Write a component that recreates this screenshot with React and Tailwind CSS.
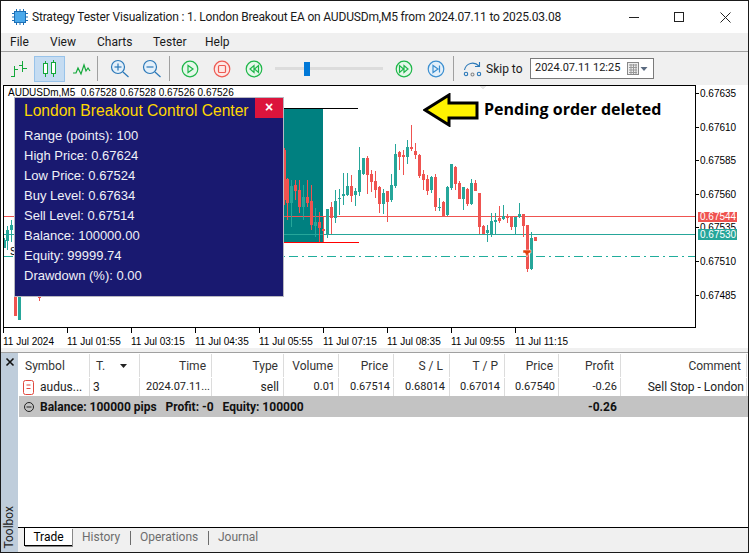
const T = "#26a69a";
const R = "#ef5350";
// x, wickTop, wickBottom, bodyTop, bodyBottom (page px)
const raw = [
  [22,297,385,297,372,T],[34,275,372,291,323,R],[46,240,338,273,323,T],[58,237,315,264,266,T],[70,190,285,252,258,T],[82,190,260,228,255,T],
  [94,195,275,228,258,R],[106,235,288,243,255,T],[118,111,258,180,246,T],[130,143,195,144,192,T],[142,138,252,144,194,R],[154,180,245,192,216,R],
  [166,183,265,213,240,R],[178,228,310,231,282,R],[190,237,312,249,282,T],[202,243,335,243,276,R],[214,192,276,225,270,T],[226,102,234,132,228,T],
  [238,123,180,126,141,R],[250,120,195,135,141,R],[262,90,162,111,141,T],[274,45,123,111,118,R],[286,99,147,123,135,R],[298,132,204,135,198,R],
  [310,180,240,192,210,R],[322,195,255,207,243,R],[334,198,250,201,240,T],[346,192,303,201,291,R],[358,264,302,291,294,T],[370,273,318,276,318,R],
  [382,228,318,231,315,T],[394,162,240,162,234,T],[406,168,240,171,222,R],[418,213,267,219,267,R],[430,231,300,231,267,T],[442,234,288,237,282,R],
  [454,207,285,219,282,T],[466,210,243,219,243,R],[478,249,372,249,351,R],[490,345,372,348,372,R],[502,345,396,360,369,T],[514,309,381,333,375,T],
  [526,309,372,330,336,T],[538,288,340,324,333,R],[550,285,330,318,327,T],[562,312,340,321,324,R],[574,321,360,321,351,R],[586,321,372,321,351,T],
  [598,279,324,312,321,T],[610,312,381,312,348,R],[622,345,486,345,477,R],[634,366,480,384,477,T],[646,381,393,381,393,R],
];
const candles = raw.map(([x, a, b, c, d, col]) => [Math.round(320 + (x - 4) / 3), 110 + a / 3, 110 + b / 3, 110 + c / 3, 110 + d / 3, col]);
const left = [
  [3,238,248,240,248,T],[6,226,250,230,241,T],[10,220,242,225,230,T],[14,290,316,297,316,R],[18,290,320,297,320,T],[38,290,301,297,297,R],
  [283,148,205,150,200,R],[286,178,220,179,203,R],[290,180,227,186,203,T],[294,180,200,185,191,R],[298,180,213,190,207,R],[302,185,220,197,207,T],
  [306,180,207,197,203,R],[310,185,230,201,225,R],[314,208,237,222,226,T],[318,212,242,222,228,R],[322,217,242,229,231,R],
];
const all = [...left, ...candles];

function Candle({ c }) {
  const [x, a, b, d, e, col] = c;
  return (
    <g fill={col}>
      <rect x={x + 1} y={Math.round(a)} width="1" height={Math.round(b - a)} />
      <rect x={x} y={Math.round(d)} width="3" height={Math.max(1, Math.round(e - d))} />
    </g>
  );
}

function Plot() {
  return (
    <svg className="block" width="691" height="241" viewBox="4 86 691 241" shapeRendering="crispEdges">
      <rect x="4" y="86" width="691" height="241" fill="#fff" />
      <polygon points="480,86 486,86 483,90" fill="#e8e8e8" />
      <rect x="200" y="108" width="123" height="134" fill="#008080" />
      <rect x="200" y="108" width="158" height="1" fill="#000" />
      <rect x="4" y="216" width="691" height="1" fill={R} />
      <rect x="4" y="234" width="691" height="1" fill={T} />
      <line x1="4" x2="695" y1="256.5" y2="256.5" stroke="#20ad9c" strokeWidth="1" strokeDasharray="9 4 2 4" />
      {all.map((c, i) => <Candle key={i} c={c} />)}
      <rect x="200" y="242" width="159" height="1" fill="#ff0000" />
      <polygon points="523,250 531,250 531,253 529,253 527,257 525,253 523,253" fill="#e2410f" stroke="#fff" strokeWidth="0.5" shapeRendering="auto" />
    </svg>
  );
}

function Btn({ children, className = "" }) {
  return <div className={`flex items-center justify-center ${className}`}>{children}</div>;
}
const Sep = () => <div className="w-px h-[25px] bg-[#a0a0a0]" />;

function Round({ col, fill, children }) {
  return (
    <svg width="18" height="18" viewBox="0 0 18 18" fill="none" stroke={col} strokeWidth="1.2">
      <circle cx="9" cy="9" r="7.8" fill={fill} />
      {children}
    </svg>
  );
}
function Mag({ minus }) {
  return (
    <svg width="20" height="20" viewBox="0 0 20 20" fill="none" stroke="#2a78b8" strokeWidth="1.2">
      <circle cx="8" cy="8" r="6.5" fill="#e4f0fa" />
      <path d="M4.5 8h7" />
      {!minus && <path d="M8 4.5v7" />}
      <path d="M13 13l5.5 5" />
    </svg>
  );
}

const menus = [["File","w-[40px]"],["View","w-[47px]"],["Charts","w-[56px]"],["Tester","w-[52px]"],["Help","w-[40px]"]];
const prices = ["0.67635","0.67610","0.67585","0.67560","0.67535","0.67510","0.67485"];
const times = ["11 Jul 2024","11 Jul 01:55","11 Jul 03:15","11 Jul 04:35","11 Jul 05:55","11 Jul 07:15","11 Jul 08:35","11 Jul 09:55","11 Jul 11:15"];
const stats = ["Range (points): 100","High Price: 0.67624","Low Price: 0.67524","Buy Level: 0.67634","Sell Level: 0.67514","Balance: 100000.00","Equity: 99999.74","Drawdown (%): 0.00"];
const cols = "grid grid-cols-[71px_50px_72px_72px_55px_55px_56px_55px_54px_62px_126px]";
const heads = [["Symbol","pl-[6px]"],["T.","pl-[6px]"],["Time","justify-end pr-[5px]"],["Type","justify-end pr-[5px]"],["Volume","justify-end pr-[5px]"],["Price","justify-end pr-[5px]"],["S / L","justify-end pr-[6px]"],["T / P","justify-end pr-[6px]"],["Price","justify-end pr-[5px]"],["Profit","justify-end pr-[6px]"],["Comment","justify-end pr-[5px]"]];
const cells = [["audus...","pl-[21px]"],["3","pl-[3px]"],["2024.07.11...","pl-[6px] text-[11px]"],["sell","justify-end pr-[4px]"],["0.01","justify-end pr-[3px] text-[11px]"],["0.67514","justify-end pr-[3px] text-[11px]"],["0.68014","justify-end pr-[4px] text-[11px]"],["0.67014","justify-end pr-[4px] text-[11px]"],["0.67540","justify-end pr-[3px] text-[11px]"],["-0.26","justify-end pr-[3px] text-[11px]"],["Sell Stop - London","justify-end pr-[2px]"]];

export default function App() {
  return (
    <div className="w-[749px] h-[553px] border border-[#1a1a1a] bg-[#f0f0f0] flex flex-col overflow-hidden text-[12px] text-[#1a1a1a] [font-family:'Roboto',sans-serif]">
      {/* title */}
      <div className="h-[32px] shrink-0 bg-white flex items-center pl-[11px]">
        <svg width="16" height="16" viewBox="0 0 16 16">
          <rect x="2.5" y="2.5" width="11" height="11" fill="#4aa8ea" stroke="#1d6fb5" />
          <path d="M4.5 0v16M8 0v16M11.5 0v16M0 4.5h16M0 8h16M0 11.5h16" stroke="#1d6fb5" strokeDasharray="2.2 11.6" fill="none" />
        </svg>
        <span className="ml-[4px] whitespace-nowrap tracking-[-0.18px]">Strategy Tester Visualization : 1. London Breakout EA on AUDUSDm,M5 from 2024.07.11 to 2025.03.08</span>
        <div className="ml-auto flex items-center">
          <Btn className="w-[44px]"><div className="w-[10px] h-px bg-[#222]" /></Btn>
          <Btn className="w-[46px]"><div className="w-[10px] h-[10px] border border-[#222]" /></Btn>
          <Btn className="w-[46px]">
            <svg width="11" height="11" viewBox="0 0 11 11" stroke="#222"><path d="M0.5 0.5l10 10M10.5 0.5l-10 10" /></svg>
          </Btn>
        </div>
      </div>
      {/* menu */}
      <div className="h-[19px] shrink-0 border-b border-[#a0a0a0] flex items-center pl-[9px]">
        {menus.map(([m, w]) => <div key={m} className={w}>{m}</div>)}
      </div>
      {/* toolbar */}
      <div className="h-[33px] shrink-0 flex items-center pl-[7px]">
        <Btn className="w-[21px]">
          <svg width="18" height="18" viewBox="0 0 18 18" stroke="#13a83a" fill="none" shapeRendering="crispEdges"><path d="M4.5 6v11M1 16.5h3.5M4.5 9.5H8M12.5 1v11M9 5.5h3.5M12.5 8.5H17" /></svg>
        </Btn>
        <Btn className="ml-[5px] w-[31px] h-[26px] bg-[#c5dcf2] border border-[#98c3ea]">
          <svg width="16" height="18" viewBox="0 0 16 18" stroke="#13a83a" fill="#fff" shapeRendering="crispEdges"><path d="M3.5 1v16M11.5 0v17" /><rect x="1.5" y="3.5" width="4" height="10" /><rect x="9.5" y="2.5" width="4" height="11" /></svg>
        </Btn>
        <Btn className="ml-[6px] w-[22px]">
          <svg width="18" height="14" viewBox="0 0 18 14" stroke="#13a83a" fill="none" strokeWidth="1.2"><path d="M0 11h3l2-5 3 6 3-9 2 6 2-3 2 3" /></svg>
        </Btn>
        <div className="ml-[4px]"><Sep /></div>
        <Btn className="ml-[11px] w-[22px]"><Mag /></Btn>
        <Btn className="ml-[10px] w-[22px]"><Mag minus /></Btn>
        <div className="ml-[6px]"><Sep /></div>
        <Btn className="ml-[11px] w-[18px]"><Round col="#1fb64a" fill="#e6f8ea"><path d="M7 5.5v7l5-3.5z" /></Round></Btn>
        <Btn className="ml-[14px] w-[18px]"><Round col="#ee5a52" fill="#fde8e6"><rect x="5.5" y="5.5" width="7" height="7" rx="1" /></Round></Btn>
        <Btn className="ml-[14px] w-[18px]"><Round col="#1fb64a" fill="#e6f8ea"><path d="M9 5.5v7L5 9zM13.5 5.5v7L9.5 9z" /></Round></Btn>
        <div className="ml-[12px] w-[108px] h-[3px] bg-[#dcdcdc] relative flex items-center">
          <div className="ml-[29px] w-[6px] h-[14px] bg-[#0078d7] shrink-0" />
        </div>
        <Btn className="ml-[12px] w-[18px]"><Round col="#1fb64a" fill="#e6f8ea"><path d="M4.5 5.5v7L8.5 9zM9 5.5v7l4-3.5z" /></Round></Btn>
        <Btn className="ml-[14px] w-[18px]"><Round col="#3c8fd0" fill="#e4f0fa"><path d="M6 5.5v7l5-3.5zM12.5 5.5v7" /></Round></Btn>
        <div className="ml-[8px]"><Sep /></div>
        <Btn className="ml-[9px] w-[20px]">
          <svg width="20" height="18" viewBox="0 0 20 18" fill="none" stroke="#2a78b8" strokeWidth="1.1"><path d="M1.5 10C3 3 11 1 16 6" /><path d="M16.5 2v4.5H12" /><circle cx="3" cy="14" r="1.7" /><circle cx="9.5" cy="14.5" r="1.5" stroke="#888" /><circle cx="16" cy="14" r="1.7" /></svg>
        </Btn>
        <div className="ml-[3px] w-[44px] whitespace-nowrap">Skip to</div>
        <div className="w-[124px] h-[21px] bg-white border border-[#7a7a7a] flex items-center pl-[4px]">
          <span className="whitespace-nowrap text-[11px]">2024.07.11 12:25</span>
          <svg className="ml-auto mr-[5px]" width="21" height="14" viewBox="0 0 21 14">
            <rect x="0.5" y="0.5" width="11" height="12" fill="#eee" stroke="#888" />
            <path d="M2 3h8M2 5.5h8M2 8h8M2 10.5h8M4 2v10M6.5 2v10M9 2v10" stroke="#999" />
            <path d="M13.5 5h7L17 9z" fill="#5a6a80" />
          </svg>
        </div>
      </div>
      {/* chart */}
      <div className="h-[263px] shrink-0 bg-white flex relative">
        <div className="w-[2px] bg-white" />
        <div className="flex flex-col w-[693px]">
          <div className="border border-black h-[243px] relative shrink-0">
            <Plot />
            <div className="absolute left-[4px] top-[0px] text-[10px] leading-[13px] text-black whitespace-pre [font-family:'Liberation_Sans',sans-serif]">AUDUSDm,M5  0.67528 0.67528 0.67526 0.67526</div>
            <div className="absolute left-[6px] top-[159px] text-[10px] leading-[13px] text-black [font-family:'Liberation_Sans',sans-serif]">S</div>
            {/* info panel */}
            <div className="absolute left-[10px] top-[11px] w-[270px] h-[200px] bg-[#191970] border border-[#b8b8c0] [font-family:'Liberation_Sans',sans-serif]">
              <div className="flex h-[20px]">
                <div className="pl-[9px] text-[15.6px] leading-[26px] text-[#ffd700] whitespace-nowrap">London Breakout Control Center</div>
                <div className="ml-auto w-[28px] h-[20px] bg-[#dc143c] text-white font-bold text-[14px] leading-[18px] text-center">×</div>
              </div>
              <div className="mt-[8px] pl-[9px] flex flex-col text-[#f0f0f8] text-[13px] leading-[20px]">
                {stats.map((s) => <div key={s}>{s}</div>)}
              </div>
            </div>
            {/* annotation */}
            <svg className="absolute left-[419px] top-[7px]" width="56" height="34" viewBox="0 0 56 34">
              <polygon points="2,17 26,2 26,10 54,10 54,25 26,25 26,32" fill="#fff200" stroke="#000" strokeWidth="3" />
            </svg>
            <div className="absolute left-[480px] top-[12px] text-[16px] leading-[22px] font-bold text-black whitespace-nowrap [font-family:'Open_Sans',sans-serif]">Pending order deleted</div>
          </div>
          <div className="flex text-[10px] leading-[13px] text-black [font-family:'Liberation_Sans',sans-serif]">
            {times.map((t) => (
              <div key={t} className="w-[64px] shrink-0 h-[20px] border-l border-black mt-0 relative">
                <div className="absolute left-0 top-[5px] w-[64px] h-[15px] bg-white -ml-px pt-[2px] whitespace-nowrap">{t}</div>
              </div>
            ))}
          </div>
        </div>
        {/* price axis */}
        <div className="flex flex-col pt-[2px] text-[10px] leading-[14px] text-black [font-family:'Liberation_Sans',sans-serif]">
          {prices.map((p) => (
            <div key={p} className="h-[33.6px] shrink-0 flex items-start">
              <div className="w-[3px] h-px bg-black mt-[6px]" /><span className="ml-[1px]">{p}</span>
            </div>
          ))}
        </div>
        <div className="absolute left-[697px] top-[127px] w-[39px] h-[10px] bg-[#ef5350] text-white text-[10px] leading-[10px] pl-[2px] [font-family:'Liberation_Sans',sans-serif]">0.67544</div>
        <div className="absolute left-[697px] top-[144px] w-[39px] h-[11px] bg-[#26a69a] text-white text-[10px] leading-[11px] pl-[2px] [font-family:'Liberation_Sans',sans-serif]">0.67530</div>
      </div>
      {/* toolbox */}
      <div className="h-[5px] shrink-0 border-b border-[#a0a0a0]" />
      <div className="flex-1 flex min-h-0">
        <div className="w-[17px] shrink-0 bg-[#bfcddb] flex flex-col items-center justify-between pt-[4px] pb-[3px]">
          <svg width="10" height="10" viewBox="0 0 10 10" stroke="#111" strokeWidth="1.6"><path d="M1.5 1.5l7 7M8.5 1.5l-7 7" /></svg>
          <div className="[writing-mode:vertical-rl] rotate-180 leading-[15px] text-[#222]">Toolbox</div>
        </div>
        <div className="flex-1 flex flex-col bg-white min-w-0">
          <div className="flex-1 pl-px">
            <div className={`${cols} h-[24px] pt-px text-[#333]`}>
              {heads.map(([h, c], i) => (
                <div key={i} className={`flex items-center border-r border-[#dcdcdc] ${c}`}>
                  {h}
                  {h === "T." && <svg className="ml-[15px]" width="7" height="4" viewBox="0 0 7 4"><path d="M0 0h7L3.5 4z" fill="#222" /></svg>}
                </div>
              ))}
            </div>
            <div className={`${cols} h-[19px] pt-px text-[#222]`}>
              {cells.map(([t, c], i) => (
                <div key={i} className={`flex items-center border-r border-[#dcdcdc] relative whitespace-nowrap ${c}`}>
                  {i === 0 && (
                    <svg className="absolute left-[4px] top-[2px]" width="11" height="15" viewBox="0 0 11 15" fill="none" stroke="#e0483e"><rect x="0.5" y="0.5" width="10" height="14" rx="2" /><path d="M3.5 5h4M3.5 8.5h4" /></svg>
                  )}
                  {t}
                </div>
              ))}
            </div>
            <div className="h-[21px] bg-[#c3c3c3] flex items-center font-bold relative text-[#111]">
              <svg className="ml-[5px]" width="10" height="10" viewBox="0 0 10 10" fill="none" stroke="#222"><circle cx="5" cy="5" r="4.5" /><path d="M2.5 5h5" /></svg>
              <span className="ml-[6px] whitespace-pre">Balance: 100000 pips   Profit: -0   Equity: 100000</span>
              <span className="absolute left-[569px]">-0.26</span>
            </div>
          </div>
          <div className="h-[25px] shrink-0 bg-[#f0f0f0] border-t border-black flex items-start pl-[6px] text-[#6d6d6d]">
            <div className="w-[48px] h-[18px] bg-white border-l border-b border-black shadow-[1px_1px_0_#888] text-black text-center leading-[18px]">Trade</div>
            <div className="ml-[10px] w-[48px] h-[18px] leading-[18px] flex"><span>History</span></div>
            <div className="w-px h-[14px] mt-[3px] bg-[#6d6d6d]" />
            <div className="ml-[9px] w-[68px] leading-[18px]">Operations</div>
            <div className="w-px h-[14px] mt-[3px] bg-[#6d6d6d]" />
            <div className="ml-[9px] leading-[18px]">Journal</div>
          </div>
        </div>
      </div>
    </div>
  );
}
